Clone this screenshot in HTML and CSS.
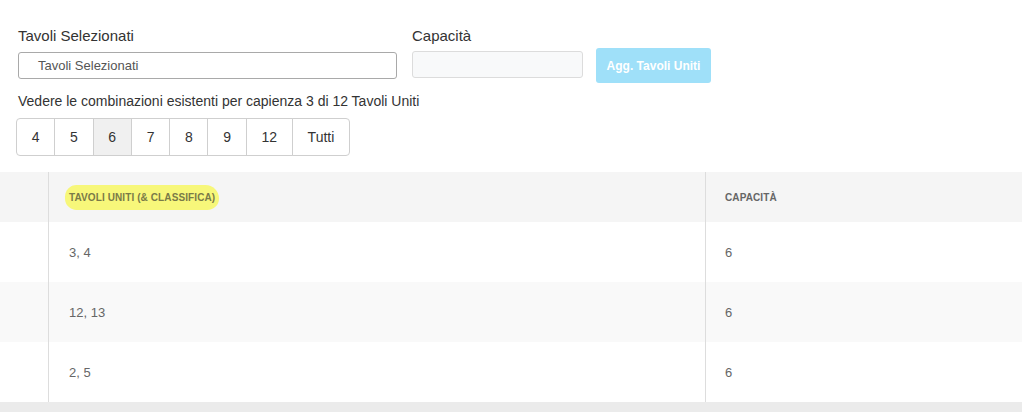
FILE: index.html
```html
<!DOCTYPE html>
<html lang="it">
<head>
<meta charset="utf-8">
<title>Tavoli Uniti</title>
<link rel="stylesheet" href="styles.css">
</head>
<body>
<div class="form">
  <div class="form-row">
    <div class="field field-tables">
      <label class="label">Tavoli Selezionati</label>
      <div class="input input-tables">Tavoli Selezionati</div>
    </div>
    <div class="field field-cap">
      <label class="label">Capacità</label>
      <div class="input input-cap"></div>
    </div>
    <button class="btn-add">Agg. Tavoli Uniti</button>
  </div>
  <p class="hint">Vedere le combinazioni esistenti per capienza 3 di 12 Tavoli Uniti</p>
  <div class="btn-group">
    <button class="seg">4</button>
    <button class="seg">5</button>
    <button class="seg active">6</button>
    <button class="seg">7</button>
    <button class="seg">8</button>
    <button class="seg">9</button>
    <button class="seg">12</button>
    <button class="seg">Tutti</button>
  </div>
</div>

<div class="table">
  <div class="row head">
    <div class="cell c0"></div>
    <div class="cell c1"><span class="mark">TAVOLI UNITI (&amp; CLASSIFICA)</span></div>
    <div class="cell c2">CAPACITÀ</div>
  </div>
  <div class="row">
    <div class="cell c0"></div>
    <div class="cell c1">3, 4</div>
    <div class="cell c2">6</div>
  </div>
  <div class="row alt">
    <div class="cell c0"></div>
    <div class="cell c1">12, 13</div>
    <div class="cell c2">6</div>
  </div>
  <div class="row">
    <div class="cell c0"></div>
    <div class="cell c1">2, 5</div>
    <div class="cell c2">6</div>
  </div>
  <div class="footer-bar"></div>
</div>
</body>
</html>
```
FILE: styles.css
```css
* { box-sizing: border-box; }

html, body {
  margin: 0;
  padding: 0;
  background: #fff;
  font-family: "Liberation Sans", Arial, sans-serif;
  color: #333;
}

.form {
  padding: 26px 0 0 16px;
}

.form-row {
  display: flex;
  align-items: flex-start;
  padding-left: 2px;
}

.field {
  display: flex;
  flex-direction: column;
}

.label {
  font-size: 15px;
  line-height: 20px;
  color: #333;
  margin-bottom: 6px;
}

.field-cap .label {
  margin-bottom: 5px;
}

.input {
  height: 27px;
  border-radius: 3px;
  font-size: 13px;
  line-height: 25px;
}

.input-tables {
  width: 379px;
  border: 1px solid #a9a9a9;
  padding-left: 19px;
  color: #555;
}

.field-cap {
  margin-left: 15px;
}

.input-cap {
  width: 171px;
  border: 1px solid #dcdcdc;
  background: #f8f9fa;
}

.btn-add {
  margin-left: 13px;
  margin-top: 22px;
  width: 115px;
  height: 35px;
  border: none;
  border-radius: 3px;
  background: #9fe0f9;
  color: #fff;
  font-family: "Liberation Sans", Arial, sans-serif;
  font-weight: bold;
  font-size: 12px;
  padding: 0;
}

.hint {
  margin: 8px 0 0 2px;
  font-size: 14px;
  line-height: 20px;
  color: #333;
}

.btn-group {
  display: flex;
  width: max-content;
  margin-top: 7px;
  height: 38px;
}

.seg {
  height: 38px;
  padding: 0 14.75px;
  border: 1px solid #cfcfcf;
  background: #fff;
  font-family: "Liberation Sans", Arial, sans-serif;
  font-size: 14px;
  color: #333;
  margin-left: -1px;
  border-radius: 0;
}

.seg:first-child {
  margin-left: 0;
  border-radius: 4px 0 0 4px;
}

.seg:last-child {
  border-radius: 0 4px 4px 0;
}

.seg.active {
  background: #f0f0f0;
}

.table {
  margin-top: 16px;
  width: 100%;
}

.row {
  display: flex;
  height: 60px;
  background: #fff;
}

.row.alt {
  background: #f9f9f9;
}

.row.head {
  height: 50px;
  background: #f5f5f5;
}

.cell {
  display: flex;
  align-items: center;
  font-size: 13px;
  color: #666;
}

.c0 {
  width: 48px;
  flex: none;
}

.c1 {
  width: 657px;
  flex: none;
  border-left: 1px solid #ddd;
  padding-left: 20px;
}

.c2 {
  flex: 1;
  border-left: 1px solid #ddd;
  padding-left: 19px;
}

.head .cell {
  font-size: 10px;
  font-weight: bold;
  color: #666;
  letter-spacing: 0.1px;
  padding-top: 1px;
}

.mark {
  background: #f7f77a;
  padding: 7px 4px 7px 4px;
  margin-left: -4px;
  border-radius: 12px 14px 12px 12px;
  color: #7a7a48;
}

.footer-bar {
  height: 10px;
  background: #ebebeb;
}
```
